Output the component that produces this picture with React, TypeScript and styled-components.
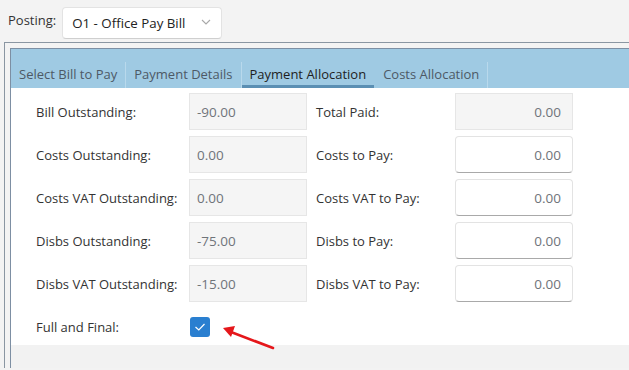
import styled, { createGlobalStyle } from 'styled-components';

const GlobalStyle = createGlobalStyle`
  html, body {
    margin: 0;
    padding: 0;
    background: #f3f3f3;
    overflow: hidden;
  }
  body {
    font-family: 'Open Sans', 'Noto Sans', sans-serif;
    font-size: 13px;
    color: #333;
  }
`;

interface FieldRow {
  left: string;
  leftValue: string;
  right: string;
  rightValue: string;
  rightReadOnly?: boolean;
}

const rows: FieldRow[] = [
  { left: 'Bill Outstanding:', leftValue: '-90.00', right: 'Total Paid:', rightValue: '0.00', rightReadOnly: true },
  { left: 'Costs Outstanding:', leftValue: '0.00', right: 'Costs to Pay:', rightValue: '0.00' },
  { left: 'Costs VAT Outstanding:', leftValue: '0.00', right: 'Costs VAT to Pay:', rightValue: '0.00' },
  { left: 'Disbs Outstanding:', leftValue: '-75.00', right: 'Disbs to Pay:', rightValue: '0.00' },
  { left: 'Disbs VAT Outstanding:', leftValue: '-15.00', right: 'Disbs VAT to Pay:', rightValue: '0.00' },
];

const tabs = ['Select Bill to Pay', 'Payment Details', 'Payment Allocation', 'Costs Allocation'];

function App() {
  return (
    <>
      <GlobalStyle />
      <Header>
        <HeaderLabel>Posting:</HeaderLabel>
        <Select>
          <span>O1 - Office Pay Bill</span>
          <svg width="10" height="6" viewBox="0 0 10 6">
            <path d="M1 1 L5 5 L9 1" fill="none" stroke="#a8a8a8" strokeWidth="1.1" />
          </svg>
        </Select>
      </Header>
      <Frame>
        <Panel>
          <TabBar>
            {tabs.map((t, i) => (
              <Tab key={t} $active={i === 2}>
                {t}
              </Tab>
            ))}
          </TabBar>
          <Content>
            <Grid>
              {rows.map((r) => (
                <Row key={r.left}>
                  <Label>{r.left}</Label>
                  <Input $readOnly>{r.leftValue}</Input>
                  <Label>{r.right}</Label>
                  <Input $readOnly={r.rightReadOnly} $right>
                    {r.rightValue}
                  </Input>
                </Row>
              ))}
              <Row>
                <Label>Full and Final:</Label>
                <CheckCell>
                  <Checkbox>
                    <svg width="12" height="10" viewBox="0 0 12 10">
                      <path d="M1.5 5 L4.8 8 L10.5 2" fill="none" stroke="#fff" strokeWidth="1.2" />
                    </svg>
                  </Checkbox>
                </CheckCell>
              </Row>
            </Grid>
            <Arrow width="60" height="30" viewBox="0 0 60 30">
              <path d="M52 24 L10 8" stroke="#e5171b" strokeWidth="2.6" strokeLinecap="round" />
              <path d="M2 4 L14 2 L10 13 Z" fill="#e5171b" />
            </Arrow>
          </Content>
          <Footer />
        </Panel>
      </Frame>
    </>
  );
}
export default App;

const Header = styled.div`
  display: flex;
  align-items: center;
  gap: 6px;
  padding: 7px 0 0 8px;
  height: 32px;
`;

const HeaderLabel = styled.span`
  font-size: 13px;
  color: #333;
  margin-top: -6px;
`;

const Select = styled.div`
  box-sizing: border-box;
  width: 160px;
  height: 32px;
  background: #fff;
  border: 1px solid #e3e3e3;
  border-bottom-color: #cfcfcf;
  border-radius: 4px;
  display: flex;
  align-items: center;
  justify-content: space-between;
  padding: 0 10px 0 9px;
  font-size: 13.3px;
  color: #222;

  svg {
    margin-top: -2px;
  }
`;

const Frame = styled.div`
  margin: 3px 0 0 4px;
  border: 1px solid #8a96a2;
  border-right: none;
  border-bottom: none;
  padding: 5px 0 0 5px;
  height: 320px;
  overflow: hidden;
`;

const Panel = styled.div`
  border-left: 1px solid #7d8fa3;
  border-top: 1px solid #7d8fa3;
  background: #fff;
`;

const TabBar = styled.div`
  background: #9fcae3;
  height: 39px;
  display: flex;
  align-items: flex-end;
`;

const Tab = styled.div<{ $active?: boolean }>`
  height: 26px;
  padding: 0 8px 2px 8px;
  display: flex;
  align-items: center;
  font-size: 13px;
  color: ${({ $active }) => ($active ? '#1e1e1e' : '#4d5966')};
  border-right: 1px solid ${({ $active }) => ($active ? 'transparent' : '#b9d9ec')};
  box-shadow: ${({ $active }) => ($active ? 'inset 0 -3px 0 #5b8fb3' : 'none')};
  box-sizing: border-box;
`;

const Content = styled.div`
  position: relative;
  background: #fff;
  padding: 5px 0 0 25px;
`;

const Grid = styled.div`
  display: flex;
  flex-direction: column;
  gap: 6px;
`;

const Row = styled.div`
  display: grid;
  grid-template-columns: 153px 118px 148px 118px;
  height: 37px;
  align-items: center;
  & > :nth-child(3) {
    padding-left: 9px;
  }
`;

const Label = styled.div`
  font-size: 13px;
  color: #333;
`;

const Input = styled.div<{ $readOnly?: boolean; $right?: boolean }>`
  box-sizing: border-box;
  height: 37px;
  display: flex;
  align-items: center;
  justify-content: ${({ $right }) => ($right ? 'flex-end' : 'flex-start')};
  padding: 0 11px 0 7px;
  font-size: 13.5px;
  color: #6f747a;
  background: ${({ $readOnly }) => ($readOnly ? '#f5f5f5' : '#fff')};
  border: 1px solid ${({ $readOnly }) => ($readOnly ? '#e6e6e6' : '#e3e3e3')};
  border-bottom-color: ${({ $readOnly }) => ($readOnly ? '#e6e6e6' : '#a9a9a9')};
  border-radius: ${({ $readOnly }) => ($readOnly ? '0' : '4px')};
`;

const CheckCell = styled.div`
  display: flex;
  align-items: center;
`;

const Checkbox = styled.div`
  width: 20px;
  height: 20px;
  margin-left: 1px;
  border-radius: 3px;
  background: #2a7fd0;
  display: flex;
  align-items: center;
  justify-content: center;
`;

const Arrow = styled.svg`
  position: absolute;
  left: 210px;
  top: 236px;
`;

const Footer = styled.div`
  height: 40px;
  background: #f2f2f2;
`;
